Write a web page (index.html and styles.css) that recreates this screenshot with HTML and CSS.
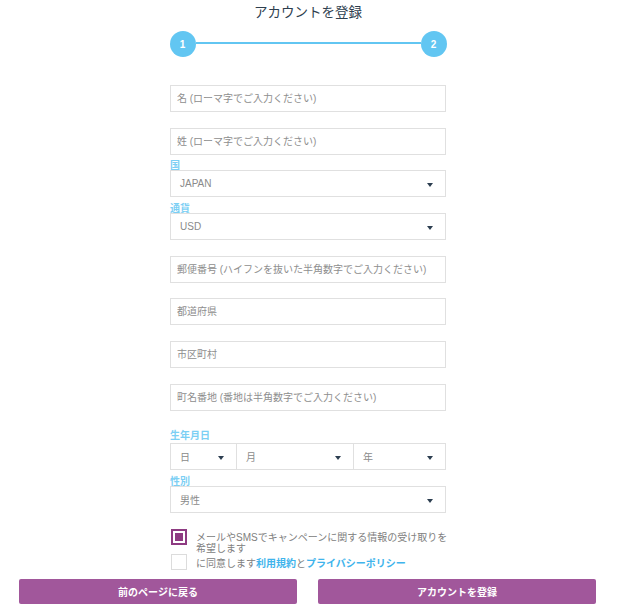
FILE: index.html
```html
<!DOCTYPE html>
<html lang="ja">
<head>
    <meta charset="UTF-8">
    <meta name="viewport" content="width=device-width, initial-scale=1.0">
    <title>アカウントを登録</title>
    <link rel="stylesheet" href="styles.css">
</head>
<body>
    <div class="page">
        <h1 class="title">アカウントを登録</h1>

        <!-- ステップ表示 -->
        <div class="stepper">
            <span class="step">1</span>
            <span class="step-line"></span>
            <span class="step">2</span>
        </div>

        <form class="form">
            <div class="field">
                <input class="input" type="text" placeholder="名 (ローマ字でご入力ください)">
            </div>
            <div class="field">
                <input class="input" type="text" placeholder="姓 (ローマ字でご入力ください)">
            </div>
            <div class="field labeled">
                <label class="field-label">国</label>
                <div class="select"><span>JAPAN</span></div>
            </div>
            <div class="field labeled">
                <label class="field-label">通貨</label>
                <div class="select"><span>USD</span></div>
            </div>
            <div class="field">
                <input class="input" type="text" placeholder="郵便番号 (ハイフンを抜いた半角数字でご入力ください)">
            </div>
            <div class="field">
                <input class="input" type="text" placeholder="都道府県">
            </div>
            <div class="field">
                <input class="input" type="text" placeholder="市区町村">
            </div>
            <div class="field">
                <input class="input" type="text" placeholder="町名番地 (番地は半角数字でご入力ください)">
            </div>
            <div class="field birth">
                <label class="field-label">生年月日</label>
                <div class="birth-row">
                    <div class="select day"><span>日</span></div>
                    <div class="select month"><span>月</span></div>
                    <div class="select year"><span>年</span></div>
                </div>
            </div>
            <div class="field labeled">
                <label class="field-label">性別</label>
                <div class="select"><span>男性</span></div>
            </div>

            <div class="checks">
                <div class="check-row">
                    <span class="checkbox checked"></span>
                    <p class="check-text">メールやSMSでキャンペーンに関する情報の受け取りを希望します</p>
                </div>
                <div class="check-row">
                    <span class="checkbox"></span>
                    <p class="check-text">に同意します<a href="#">利用規約</a>と<a href="#">プライバシーポリシー</a></p>
                </div>
            </div>
        </form>

        <div class="buttons">
            <button class="btn" type="button">前のページに戻る</button>
            <button class="btn" type="button">アカウントを登録</button>
        </div>
    </div>
</body>
</html>
```

FILE: styles.css
```css
body {
    margin: 0;
    padding: 0;
    font-family: "Liberation Sans", "Noto Sans CJK JP", sans-serif;
    background-color: #fff;
    color: #333;
}

.page {
    width: 616px;
}

.title {
    margin: 0;
    padding-top: 3px;
    text-align: center;
    font-size: 13.5px;
    line-height: 20px;
    font-weight: 400;
    color: #2e3e4e;
}

/* Stepper */
.stepper {
    width: 277px;
    margin: 8px auto 0;
    display: flex;
    align-items: center;
}

.step {
    width: 26px;
    height: 26px;
    border-radius: 50%;
    background-color: #62c6f2;
    color: #fff;
    font-size: 10px;
    font-weight: bold;
    display: flex;
    align-items: center;
    justify-content: center;
    flex-shrink: 0;
}

.step-line {
    flex-grow: 1;
    height: 2px;
    margin-top: -2px;
    background-color: #62c6f2;
}

/* Form */
.form {
    width: 276px;
    margin: 28px auto 0;
}

.field {
    margin-bottom: 15.7px;
}

.field.labeled {
    margin-top: -9px;
}

.field.birth {
    margin-top: 18px;
}

.field-label {
    display: block;
    font-size: 10px;
    line-height: 9px;
    height: 9px;
    font-weight: bold;
    color: #7ccff4;
}

.field.birth .field-label {
    line-height: 14px;
    height: 14px;
}

.input {
    display: block;
    width: 100%;
    height: 27px;
    box-sizing: border-box;
    border: 1px solid #e0e0e0;
    padding: 0 6px;
    font-family: inherit;
    font-size: 10px;
    outline: none;
}

.input::placeholder {
    color: #8e8e8e;
}

.select {
    position: relative;
    height: 27px;
    box-sizing: border-box;
    border: 1px solid #e0e0e0;
    padding: 0 9px;
    display: flex;
    align-items: center;
    font-size: 10px;
    color: #8a8a8a;
}

/* Flecha del select */
.select::after {
    content: "";
    position: absolute;
    right: 12px;
    top: 12px;
    border-left: 3px solid transparent;
    border-right: 3px solid transparent;
    border-top: 4px solid #2c3e50;
}

.birth-row {
    display: flex;
}

.birth-row .select + .select {
    border-left: none;
}

.select.day {
    width: 67px;
}

.select.month {
    width: 117px;
}

.select.year {
    flex-grow: 1;
}

/* Checkboxes */
.checks {
    margin-top: 16px;
}

.check-row {
    display: flex;
    align-items: flex-start;
    gap: 9px;
}

.checkbox {
    width: 16px;
    height: 16px;
    box-sizing: border-box;
    border: 1px solid #dcdcdc;
    margin-left: 1px;
    flex-shrink: 0;
    display: flex;
    align-items: center;
    justify-content: center;
}

.checkbox.checked {
    border: 2px solid #8e3b82;
}

.checkbox.checked::before {
    content: "";
    width: 8px;
    height: 8px;
    background-color: #8e3b82;
}

.check-text {
    flex: 1;
    margin: 3px -10px 0 0;
    font-size: 10px;
    line-height: 11px;
    color: #808080;
}

.check-row + .check-row .check-text {
    margin-top: 4px;
}

.check-text a {
    color: #3fb4ec;
    font-weight: bold;
    text-decoration: none;
}

/* Buttons */
.buttons {
    display: flex;
    gap: 21px;
    padding-left: 19px;
    margin-top: 9px;
}

.btn {
    width: 278px;
    height: 25px;
    border: none;
    border-radius: 2px;
    background-color: #a1579b;
    color: #fff;
    font-family: inherit;
    font-size: 10px;
    font-weight: bold;
    cursor: pointer;
}
```
